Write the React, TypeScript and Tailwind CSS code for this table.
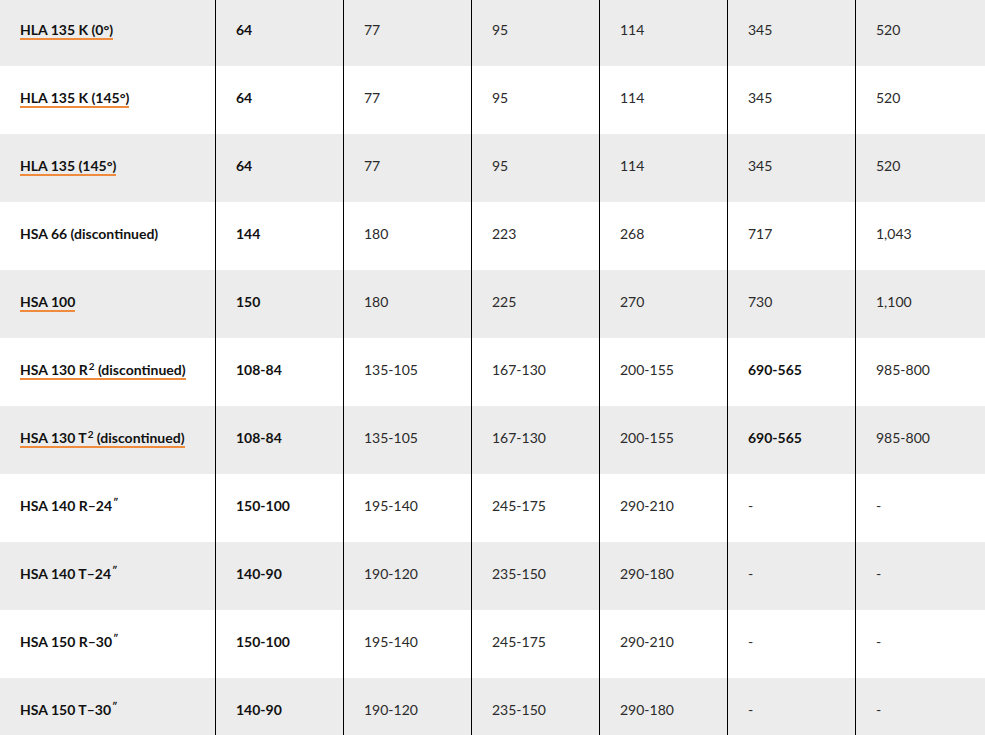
const rows: {
  name: string;
  sup?: string;
  suffix?: string;
  link: boolean;
  vals: string[];
  boldIdx: number[];
}[] = [
  { name: "HLA 135 K (0°)", link: true, vals: ["64", "77", "95", "114", "345", "520"], boldIdx: [0] },
  { name: "HLA 135 K (145°)", link: true, vals: ["64", "77", "95", "114", "345", "520"], boldIdx: [0] },
  { name: "HLA 135 (145°)", link: true, vals: ["64", "77", "95", "114", "345", "520"], boldIdx: [0] },
  { name: "HSA 66 (discontinued)", link: false, vals: ["144", "180", "223", "268", "717", "1,043"], boldIdx: [0] },
  { name: "HSA 100", link: true, vals: ["150", "180", "225", "270", "730", "1,100"], boldIdx: [0] },
  { name: "HSA 130 R", sup: "2", suffix: " (discontinued)", link: true, vals: ["108-84", "135-105", "167-130", "200-155", "690-565", "985-800"], boldIdx: [0, 4] },
  { name: "HSA 130 T", sup: "2", suffix: " (discontinued)", link: true, vals: ["108-84", "135-105", "167-130", "200-155", "690-565", "985-800"], boldIdx: [0, 4] },
  { name: "HSA 140 R–24", sup: "″", link: false, vals: ["150-100", "195-140", "245-175", "290-210", "-", "-"], boldIdx: [0] },
  { name: "HSA 140 T–24", sup: "″", link: false, vals: ["140-90", "190-120", "235-150", "290-180", "-", "-"], boldIdx: [0] },
  { name: "HSA 150 R–30", sup: "″", link: false, vals: ["150-100", "195-140", "245-175", "290-210", "-", "-"], boldIdx: [0] },
  { name: "HSA 150 T–30", sup: "″", link: false, vals: ["140-90", "190-120", "235-150", "290-180", "-", "-"], boldIdx: [0] },
];

export default function App() {
  return (
    <div className="h-[735px] w-[985px] overflow-hidden bg-white font-['Lato',sans-serif] text-[14px] text-[#111]">
      <div className="-mt-[2px]">
        {rows.map((row, i) => (
          <div
            key={i}
            className={`grid h-[68px] grid-cols-[215px_128px_128px_128px_128px_128px_1fr] ${
              i % 2 === 0 ? "bg-[#ececec]" : "bg-white"
            }`}
          >
            <div className="flex items-center pb-[3px] pl-[20px]">
              <span
                className={`border-b-2 pb-[1px] font-bold leading-[15px] ${
                  row.link ? "border-[#f08a3c]" : "border-transparent"
                }`}
              >
                {row.name}
                {row.sup && (
                  <sup className="-top-[0.45em] ml-[1px] text-[10px]">{row.sup}</sup>
                )}
                {row.suffix}
              </span>
            </div>
            {row.vals.map((v, j) => (
              <div
                key={j}
                className={`flex items-center border-l border-black pb-[6px] pl-[20px] ${
                  row.boldIdx.includes(j) ? "font-bold text-[#111]" : "font-normal text-[#2a2a2a]"
                }`}
              >
                {v}
              </div>
            ))}
          </div>
        ))}
      </div>
    </div>
  );
}
